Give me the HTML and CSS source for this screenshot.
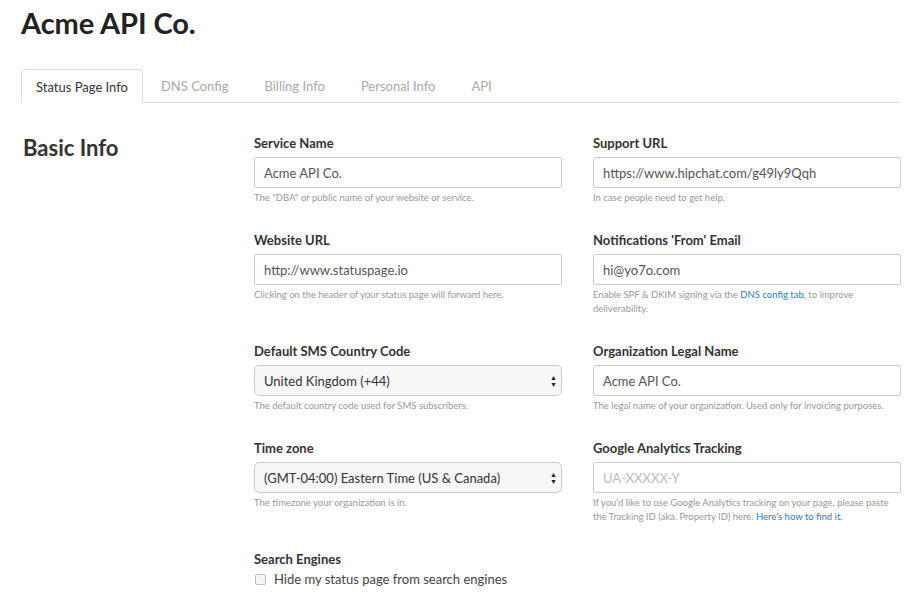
FILE: index.html
```html
<!DOCTYPE html>
<html>
<head>
<meta charset="utf-8">
<link rel="stylesheet" href="styles.css">
</head>
<body>
<div class="page">
  <h1 class="title">Acme API Co.</h1>
  <nav class="tabs">
    <a class="tab active">Status Page Info</a>
    <a class="tab">DNS Config</a>
    <a class="tab">Billing Info</a>
    <a class="tab">Personal Info</a>
    <a class="tab">API</a>
  </nav>
  <section class="section">
    <h2 class="section-title">Basic Info</h2>
    <div class="form">
      <div class="field">
        <label class="label">Service Name</label>
        <div class="input">Acme API Co.</div>
        <p class="help">The "DBA" or public name of your website or service.</p>
      </div>
      <div class="field">
        <label class="label">Support URL</label>
        <div class="input">https://www.hipchat.com/g49ly9Qqh</div>
        <p class="help">In case people need to get help.</p>
      </div>
      <div class="field">
        <label class="label">Website URL</label>
        <div class="input">http://www.statuspage.io</div>
        <p class="help">Clicking on the header of your status page will forward here.</p>
      </div>
      <div class="field">
        <label class="label">Notifications 'From' Email</label>
        <div class="input">hi@yo7o.com</div>
        <p class="help">Enable SPF &amp; DKIM signing via the <a class="link">DNS config tab</a>, to improve deliverability.</p>
      </div>
      <div class="field">
        <label class="label">Default SMS Country Code</label>
        <div class="select"><span>United Kingdom (+44)</span><span class="arrows">▲<br>▼</span></div>
        <p class="help">The default country code used for SMS subscribers.</p>
      </div>
      <div class="field">
        <label class="label">Organization Legal Name</label>
        <div class="input">Acme API Co.</div>
        <p class="help">The legal name of your organization. Used only for invoicing purposes.</p>
      </div>
      <div class="field">
        <label class="label">Time zone</label>
        <div class="select"><span>(GMT-04:00) Eastern Time (US &amp; Canada)</span><span class="arrows">▲<br>▼</span></div>
        <p class="help">The timezone your organization is in.</p>
      </div>
      <div class="field">
        <label class="label">Google Analytics Tracking</label>
        <div class="input placeholder">UA-XXXXX-Y</div>
        <p class="help">If you'd like to use Google Analytics tracking on your page, please paste the Tracking ID (aka. Property ID) here. <a class="link">Here's how to find it.</a></p>
      </div>
      <div class="field">
        <label class="label">Search Engines</label>
        <div class="check"><span class="box"></span><span>Hide my status page from search engines</span></div>
      </div>
    </div>
  </section>
</div>
</body>
</html>
```
FILE: styles.css
```css
html, body { margin: 0; padding: 0; background: #fff; }
body { font-family: Lato, "Open Sans", sans-serif; color: #333; }
.page { width: 880px; padding: 0 22px 0 21px; }
.title { margin: 0; padding-top: 6px; font-size: 29px; font-weight: 700; line-height: 34px; color: #222; letter-spacing: -0.1px; }
.tabs { display: flex; margin-top: 29px; border-bottom: 1px solid #ddd; height: 33px; }
.tab { display: flex; align-items: center; padding: 0 17px; font-size: 13px; color: #aaa; border: 1px solid transparent; border-bottom: none; border-radius: 4px 4px 0 0; }
.tab.active { color: #333; border-color: #ddd; background: #fff; height: 34px; box-sizing: border-box; padding: 0 14px; }
.section { display: flex; padding-top: 31px; }
.section-title { margin: 0; width: 233px; font-size: 22px; font-weight: 700; line-height: 28px; color: #333; padding-left: 2px; box-sizing: border-box; }
.form { display: grid; grid-template-columns: 308px 308px; column-gap: 31px; row-gap: 26px; align-items: start; }
.field { display: flex; flex-direction: column; }
.label { font-size: 13px; font-weight: 700; line-height: 18px; color: #333; }
.input, .select { margin-top: 5px; height: 31px; box-sizing: border-box; border: 1px solid #ccc; border-radius: 2px; padding: 0 9px; display: flex; align-items: center; font-size: 13px; color: #555; }
.input.placeholder { color: #bbb; }
.select { background: #f7f7f7; border-radius: 5px; justify-content: space-between; color: #333; padding-right: 4px; }
.arrows { font-size: 7px; line-height: 7px; color: #222; text-align: center; }
.help { margin: 3px 0 0 0; font-size: 9.5px; line-height: 14px; color: #999; }
.link { color: #2b7bc4; }
.check { display: flex; align-items: center; margin-top: 3px; font-size: 13px; color: #444; }
.box { width: 9px; height: 9px; border: 1px solid #bbb; border-radius: 2px; background: #f5f5f5; margin: 0 8px 0 1px; }
```
